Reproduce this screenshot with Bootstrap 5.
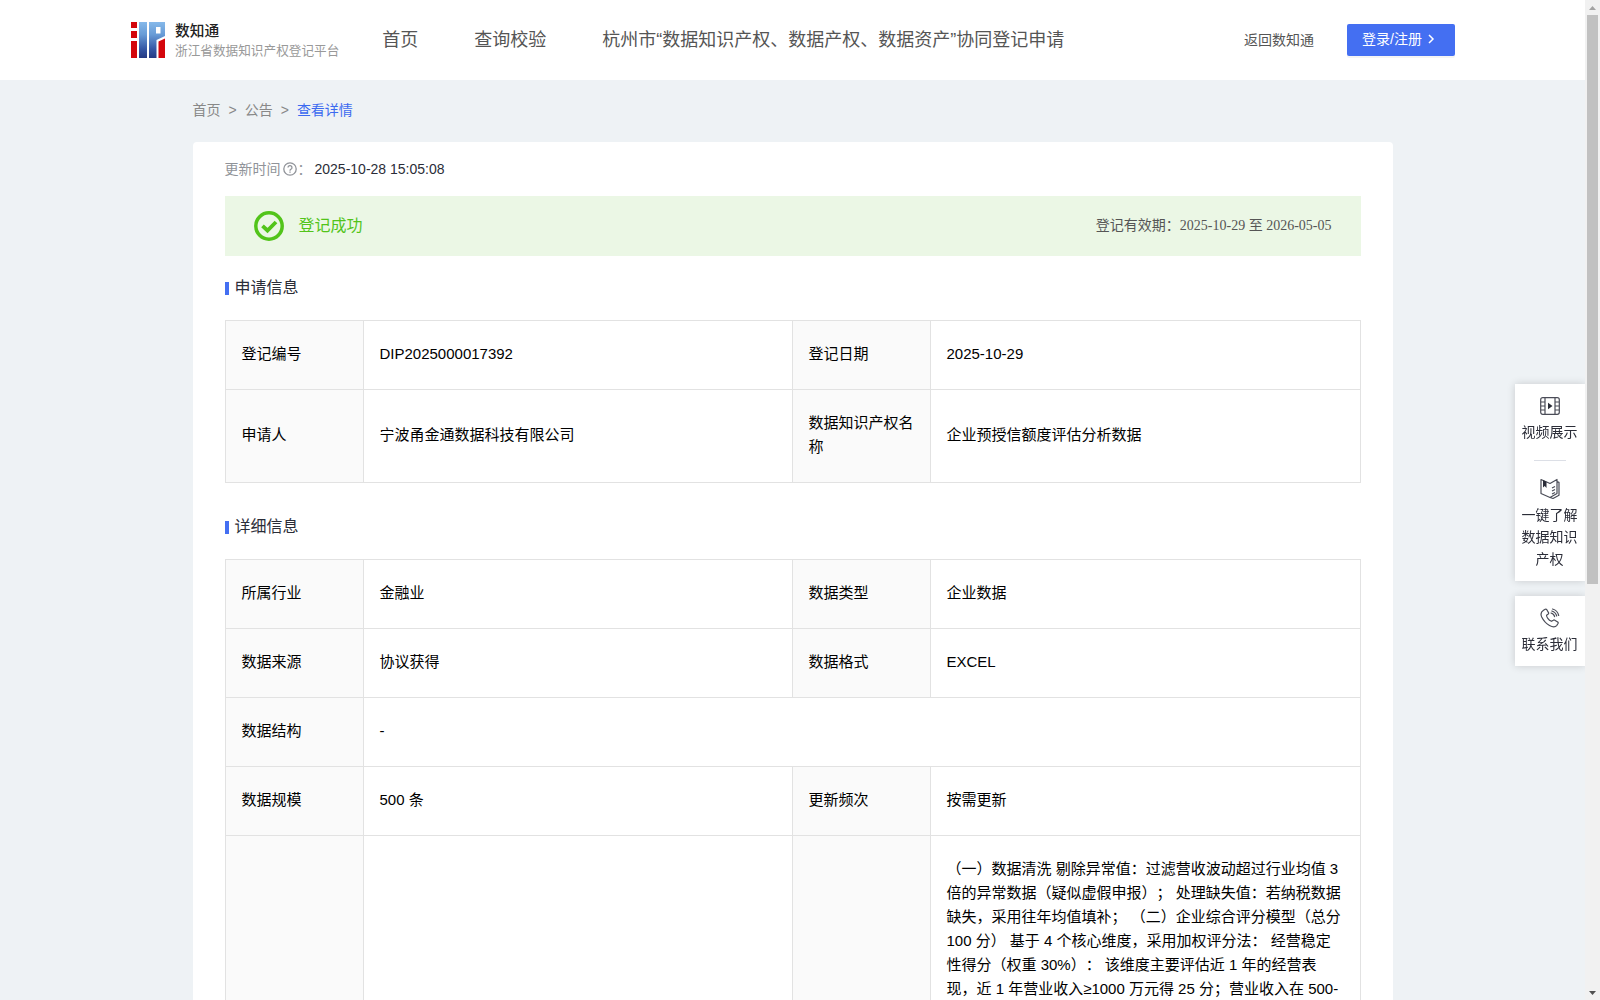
<!DOCTYPE html>
<html lang="zh-CN">
<head>
<meta charset="utf-8">
<title>数知通</title>
<link rel="stylesheet" href="https://cdn.jsdelivr.net/npm/bootstrap@5.3.0/dist/css/bootstrap.min.css">
<style>
html,body{height:100%;overflow:hidden}
body{font-family:"Liberation Sans","Noto Sans CJK SC",sans-serif;font-size:14px;line-height:22px;color:#2b2d38;background:#eef2f5;text-spacing-trim:space-all}
.viewport{height:1000px}
.page{width:1585px;overflow:hidden}
.site-header{height:80px;padding:0 130px}
.brand-text{line-height:20px;padding:0 0 2px 9px;font-family:"Noto Sans CJK SC",sans-serif}
.brand-name{font-size:14.7px;font-weight:500;color:#222}
.brand-sub{font-size:12.65px;color:#999;line-height:19px}
.main-nav{font-size:18px;color:#555;gap:56px;margin-left:43px;line-height:26px}
.back-link{color:#555;margin-right:33px;padding-bottom:1px}
.login-btn{width:108px;height:32px;background:#446ff2;border-radius:2px;color:#fff;padding:0 0 2px 15px;box-shadow:0 2px 0 rgba(0,0,0,.045)}
.shell{width:1200px;margin:0 auto}
.crumbs{height:62px;color:#888;gap:8px;padding-bottom:2px}
.crumbs .current{color:#3c6af0}
.panel{border-radius:4px;padding:0 32px;height:1100px}
.update-line{height:54px;color:#909399;padding-bottom:1px}
.help-icon{margin:0 1px 0 2px}
.update-date{margin-left:3px;color:#2b2d38}
.status-bar{height:60px;background:#ebf7e5;padding:0 29px;color:#555}
.status-text{font-size:16px;color:#52c41a;margin-left:15px;padding-bottom:1px}
.status-period{padding-bottom:2px}
.validity-dates{font-family:"Liberation Serif","Noto Sans CJK SC",serif}
.section-title{font-size:16px;line-height:24px;height:64px;gap:6px;color:#2b2d38;padding-bottom:1px}
.section-title::before{content:"";width:4px;height:13px;background:#446ff2;margin-top:2px}
.info-table{table-layout:fixed;width:1135px;margin:0;border-collapse:collapse;font-size:15px;line-height:24px;color:#000}
.info-table td,.info-table th{border:1px solid #e2e2e2;padding:21px 15px 23px 16px;font-weight:400;vertical-align:middle;white-space:nowrap}
.info-table th{background:#fafafa;white-space:normal;text-align:left}
.info-table .top-cell{vertical-align:top}
.gap-block{height:12px}
.side-float{right:15px;top:384px;width:70px}
.side-card{background:#fff;box-shadow:0 0 8px rgba(0,0,0,.16);text-align:center;clip-path:inset(-10px 0 -10px -10px)}
.side-card svg{display:block;margin:0 auto}
.side-label{padding-right:1px}
.side-rule{width:32px;height:1px;background:#dcdfe6;margin:0 auto}
.scroll-rail{width:15px;background:#f1f1f1}
.scroll-thumb{width:11px;height:569px;background:#c1c1c1;margin:0 auto}
.scroll-arrow{height:15px;display:block}
</style>
<script src="https://cdn.jsdelivr.net/npm/bootstrap@5.3.0/dist/js/bootstrap.bundle.min.js"></script>
</head>
<body>
<div class="viewport d-flex">
 <div class="page">
  <header class="site-header bg-white d-flex align-items-center">
   <svg width="36" height="38" viewBox="0 0 36 38">
    <defs><linearGradient id="blue" x1="0" y1="0" x2="0" y2="1"><stop offset="0" stop-color="#86b9ea"/><stop offset=".35" stop-color="#679bd6"/><stop offset=".75" stop-color="#3557a5"/><stop offset="1" stop-color="#253a83"/></linearGradient></defs>
    <g fill="#d4060c"><path d="M1 1h6v6H1zM1 10h6v7H1zM1 20h6v17H1zM28.500 20.500l6.500-3v19.500h-6.500z"/></g>
    <path fill="url(#blue)" d="M9 1h8v36H9zM19 1h16v14l-8.500 4v18H19zM26 6v6.500h4.500V6z" fill-rule="evenodd"/>
   </svg>
   <div class="brand-text"><div class="brand-name">数知通</div><div class="brand-sub">浙江省数据知识产权登记平台</div></div>
   <nav class="main-nav d-flex text-nowrap"><span>首页</span><span>查询校验</span><span>杭州市“数据知识产权、数据产权、数据资产”协同登记申请</span></nav>
   <span class="back-link ms-auto">返回数知通</span>
   <span class="login-btn d-flex align-items-center">登录/注册<svg class="ms-1" width="10" height="10" viewBox="0 0 10 10" fill="none" stroke="#fff" stroke-width="1.500"><path d="M3 1l4 4-4 4"/></svg></span>
  </header>
  <main class="shell">
   <div class="crumbs d-flex align-items-center"><span>首页</span><span>&gt;</span><span>公告</span><span>&gt;</span><span class="current">查看详情</span></div>
   <section class="panel bg-white">
    <div class="update-line d-flex align-items-center">更新时间<svg class="help-icon" width="14" height="14" viewBox="0 0 14 14" fill="none" stroke="#909399" stroke-width="1.300"><circle cx="7" cy="7" r="6.200"/><path d="M5 5.600a2 1.900 0 1 1 2.800 1.700Q7 7.700 7 8.700M7 9.600v1.200"/></svg><span>：</span><span class="update-date">2025-10-28 15:05:08</span></div>
    <div class="status-bar d-flex align-items-center">
     <svg width="30" height="30" viewBox="0 0 30 30" fill="none" stroke="#52c41a"><circle cx="15" cy="15" r="13.200" stroke-width="3.500"/><path d="M8.500 14.800l5 4.700 8.500-8.500" stroke-width="3.800"/></svg>
     <span class="status-text">登记成功</span>
     <span class="status-period ms-auto">登记有效期：<span class="validity-dates">2025-10-29 至 2026-05-05</span></span>
    </div>
    <h2 class="section-title d-flex align-items-center m-0 fw-normal">申请信息</h2>
    <table class="info-table">
     <colgroup><col style="width:138px"><col style="width:429px"><col style="width:138px"><col style="width:430px"></colgroup>
     <tr><th>登记编号</th><td>DIP2025000017392</td><th>登记日期</th><td>2025-10-29</td></tr>
     <tr><th>申请人</th><td>宁波甬金通数据科技有限公司</td><th>数据知识产权名称</th><td>企业预授信额度评估分析数据</td></tr>
    </table>
    <div class="gap-block"></div>
    <h2 class="section-title d-flex align-items-center m-0 fw-normal">详细信息</h2>
    <table class="info-table">
     <colgroup><col style="width:138px"><col style="width:429px"><col style="width:138px"><col style="width:430px"></colgroup>
     <tr><th>所属行业</th><td>金融业</td><th>数据类型</th><td>企业数据</td></tr>
     <tr><th>数据来源</th><td>协议获得</td><th>数据格式</th><td>EXCEL</td></tr>
     <tr><th>数据结构</th><td colspan="3">-</td></tr>
     <tr><th>数据规模</th><td>500 条</td><th>更新频次</th><td>按需更新</td></tr>
     <tr><th></th><td></td><th></th><td class="top-cell">（一）数据清洗 剔除异常值：过滤营收波动超过行业均值 3<br>倍的异常数据（疑似虚假申报）； 处理缺失值：若纳税数据<br>缺失，采用往年均值填补； （二）企业综合评分模型（总分<br>100 分） 基于 4 个核心维度，采用加权评分法： 经营稳定<br>性得分（权重 30%）： 该维度主要评估近 1 年的经营表<br>现，近 1 年营业收入≥1000 万元得 25 分；营业收入在 500-</td></tr>
    </table>
   </section>
  </main>
 </div>
 <div class="scroll-rail d-flex flex-column">
  <svg class="scroll-arrow" width="15" height="15"><path fill="#a3a3a3" d="M4 10l3.500-4 3.500 4z"/></svg>
  <div class="scroll-thumb"></div>
  <svg class="scroll-arrow mt-auto" width="15" height="15"><path fill="#505050" d="M4 6l3.500 4L11 6z"/></svg>
 </div>
</div>
<aside class="side-float position-fixed">
 <div class="side-card" style="height:197px;padding-top:12px">
  <svg width="20" height="20" viewBox="0 0 20 20" fill="none" stroke="#4a4c57" stroke-width="1.200"><rect x=".7" y="1.700" width="18.600" height="16.600" rx="2"/><path d="M5 2v16M15 2v16M1 6h4M1 10h4M1 14h4M15 6h4M15 10h4M15 14h4"/><path d="M8 6.800v6.400l4.500-3.200z" fill="#2b2d38" stroke="none"/></svg>
  <div class="side-label" style="margin-top:5px">视频展示</div><div style="height:17px"></div><div class="side-rule"></div><div style="height:17px"></div>
  <svg width="20" height="22" viewBox="0 0 20 22" fill="none" stroke="#4a4c57" stroke-width="1.200" stroke-linejoin="round"><path d="M1 1.500l9 4 7-4v14l-7 4-9-4zM17 3.500l2 .7v13l-6 3.300-3-1M12 10l3-1.500M12 13l3-1.500M12 16l3-1.500"/><path d="M3 2v7.500l1.700-1.500L6.500 10V3.800z" fill="#2b2d38" stroke="none"/></svg>
  <div class="side-label" style="margin-top:4px">一键了解<br>数据知识<br>产权</div>
 </div>
 <div class="side-card" style="height:70px;margin-top:15px;padding-top:12px">
  <svg width="20" height="20" viewBox="0 0 20 20" fill="none" stroke="#4a4c57" stroke-width="1.200" stroke-linejoin="round" stroke-linecap="round"><path d="M3.500 2.200L5.200 1.200Q6.200.8 6.800 1.700L8.500 4.600Q8.900 5.400 8.200 6L6.600 7.300Q6.300 8.200 7.800 10.300T11.500 13.300L13.300 12.200Q14 11.700 14.800 12.200L17.700 14Q18.500 14.600 18 15.500L16.900 17.300Q14.500 20.300 9.500 17.500T1.700 9Q-.3 4.500 3.500 2.200z"/><path d="M11 5Q14 5.800 14.600 8.600M12.500 1Q17.500 2.300 18.700 7.500M11.800 3Q15.600 4 16.700 8"/></svg>
  <div class="side-label" style="margin-top:5px">联系我们</div>
 </div>
</aside>
</body>
</html>
